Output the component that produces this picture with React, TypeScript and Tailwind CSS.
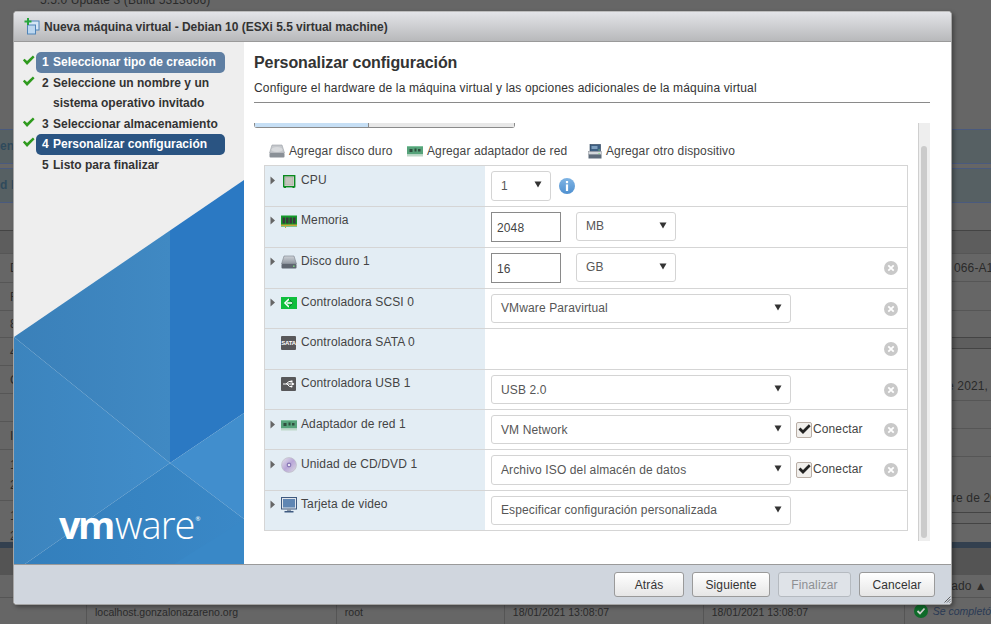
import React from "react";

const F = "font-['Liberation_Sans',Arial,sans-serif]";

function Caret() {
  return <svg width="6" height="9" viewBox="0 0 6 9" className="shrink-0"><path d="M0.5 0.5 L5 4.5 L0.5 8.5 Z" fill="#666" /></svg>;
}

function DriveIcon() {
  return (
    <svg width="16" height="14" viewBox="0 0 16 14">
      <defs><linearGradient id="dr" x1="0" y1="0" x2="0" y2="1"><stop offset="0" stopColor="#cfd3d8" /><stop offset="1" stopColor="#8e959e" /></linearGradient></defs>
      <path d="M3 1 H13 L15.5 9 H0.5 Z" fill="url(#dr)" stroke="#7b828a" strokeWidth="0.6" />
      <rect x="0.5" y="9" width="15" height="4.5" rx="1" fill="#5f6670" />
      <rect x="12" y="10.5" width="1.6" height="1.4" fill="#7fd67f" />
    </svg>
  );
}

function AddDiskIcon() {
  return (
    <svg width="16" height="15" viewBox="0 0 16 15">
      <path d="M3 1 H13 L15.5 9 H0.5 Z" fill="#c5c8cc" stroke="#9aa0a6" strokeWidth="0.6" />
      <ellipse cx="8" cy="5.5" rx="5.5" ry="2.6" fill="#d8dadd" />
      <rect x="0.5" y="9" width="15" height="4.5" rx="1" fill="#8a9097" />
    </svg>
  );
}

function CpuIcon() {
  return (
    <svg width="13" height="13" viewBox="0 0 13 13" className="ml-[2px]">
      <rect x="0.7" y="0.7" width="11" height="11" fill="#d3d3cc" stroke="#0a8a1f" strokeWidth="1.4" />
      <rect x="2.5" y="2.5" width="7.4" height="7.4" fill="#c4c4bc" stroke="#a8a8a0" strokeWidth="0.5" />
      <rect x="1" y="12" width="2" height="1" fill="#0a8a1f" />
      <rect x="9.5" y="12" width="2" height="1" fill="#0a8a1f" />
    </svg>
  );
}

function MemIcon() {
  return (
    <svg width="16" height="13" viewBox="0 0 16 13">
      <rect x="0" y="0.5" width="16" height="11" fill="#149a2a" />
      <rect x="0" y="9.5" width="16" height="1.5" fill="#c8a63a" />
      {[1.5, 5, 8.5, 12].map((x) => <rect key={x} x={x} y="2.5" width="2.6" height="6" fill="#3a3a3a" />)}
      <rect x="4" y="11.5" width="1" height="1.5" fill="#c8a63a" />
    </svg>
  );
}

function ScsiIcon() {
  return (
    <svg width="16" height="12" viewBox="0 0 16 12">
      <rect width="16" height="12" fill="#0fbf3c" />
      <path d="M8 2 L4 6 L8 10 M6 6 H12" fill="none" stroke="#fff" strokeWidth="1.6" />
      <path d="M8 2 L12 6 L8 10" fill="none" stroke="#0a6c22" strokeWidth="0.8" />
    </svg>
  );
}

function SataIcon() {
  return (
    <div className="w-[15px] h-[14px] bg-[#58585a] text-white text-[6px] font-bold leading-[14px] text-center rounded-[1px] tracking-[-0.2px]">SATA</div>
  );
}

function UsbIcon() {
  return (
    <svg width="15" height="14" viewBox="0 0 15 14">
      <rect width="15" height="14" rx="1" fill="#58585a" />
      <path d="M2 7 H13 M5 7 L8 4.5 H10 M6 7 L8.5 9.5 H10" fill="none" stroke="#fff" strokeWidth="1" />
      <path d="M11 5.5 L13.5 7 L11 8.5 Z" fill="#fff" />
      <rect x="9.5" y="3.5" width="2" height="2" fill="#fff" />
      <circle cx="10.5" cy="9.5" r="1" fill="#fff" />
    </svg>
  );
}

function NetIcon() {
  return (
    <svg width="16" height="11" viewBox="0 0 16 11">
      <rect width="16" height="8.5" fill="#56a37a" />
      <rect x="0" y="8.5" width="16" height="2" fill="#bfd9c9" />
      <rect x="2.5" y="3" width="3" height="3" fill="#2f4f3e" />
      <rect x="7.5" y="2.5" width="2" height="3" fill="#2f4f3e" />
      <rect x="11" y="3" width="2.5" height="2.5" fill="#2f4f3e" />
      <rect x="0" y="0" width="16" height="1" fill="#7fc29d" />
    </svg>
  );
}

function CdIcon() {
  return (
    <svg width="16" height="16" viewBox="0 0 16 16">
      <defs><linearGradient id="cd" x1="0" y1="0" x2="1" y2="1"><stop offset="0" stopColor="#e6e6ea" /><stop offset="0.5" stopColor="#b9a7d8" /><stop offset="1" stopColor="#dcdce2" /></linearGradient></defs>
      <circle cx="8" cy="8" r="7.5" fill="url(#cd)" stroke="#b4b4ba" strokeWidth="0.5" />
      <circle cx="8" cy="8" r="2.4" fill="#8b7bb8" />
      <circle cx="8" cy="8" r="1.1" fill="#fff" />
    </svg>
  );
}

function MonitorIcon() {
  return (
    <svg width="16" height="16" viewBox="0 0 16 16">
      <rect x="0.5" y="0.5" width="15" height="11.5" fill="#dfe4ea" stroke="#3e5a80" />
      <rect x="2" y="2" width="12" height="8.5" fill="#5f86b3" />
      <rect x="6" y="12" width="4" height="2" fill="#8b97a6" />
      <rect x="3.5" y="14" width="9" height="1.5" fill="#3e5a80" />
    </svg>
  );
}

function OtherDevIcon() {
  return (
    <svg width="14" height="15" viewBox="0 0 14 15">
      <rect x="2" y="0.5" width="10.5" height="7" fill="#3d5f82" stroke="#2a3f58" strokeWidth="0.6" />
      <rect x="3.5" y="2" width="6" height="3" fill="#7fa0bf" />
      <rect x="0.5" y="7.5" width="13" height="3" fill="#d2d6db" stroke="#8a9097" strokeWidth="0.5" />
      <rect x="0.5" y="10.5" width="13" height="4" fill="#5d6b7a" />
      <rect x="10.5" y="5.5" width="1.2" height="1" fill="#7fe07f" />
      <rect x="10.5" y="9" width="1.2" height="1" fill="#7fe07f" />
    </svg>
  );
}

function Info() {
  return (
    <svg width="16" height="16" viewBox="0 0 16 16">
      <defs><linearGradient id="inf" x1="0" y1="0" x2="0" y2="1"><stop offset="0" stopColor="#7fb4e4" /><stop offset="1" stopColor="#4f90d0" /></linearGradient></defs>
      <circle cx="8" cy="8" r="8" fill="url(#inf)" />
      <rect x="6.9" y="3" width="2.2" height="2.2" fill="#fff" />
      <rect x="6.9" y="6.4" width="2.2" height="6.6" fill="#fff" />
    </svg>
  );
}

function Remove() {
  return (
    <svg width="14" height="14" viewBox="0 0 14 14">
      <circle cx="7" cy="7" r="7" fill="#c9c9c9" />
      <path d="M4.3 4.3 L9.7 9.7 M9.7 4.3 L4.3 9.7" stroke="#fff" strokeWidth="1.8" />
    </svg>
  );
}

function Check({ size = 13 }: { size?: number }) {
  return (
    <svg width={size} height={size * 0.8} viewBox="0 0 15 12">
      <path d="M1 6 L3 4.2 L5.8 7 L12.6 0.5 L14.5 2.5 L5.8 11.5 Z" fill="#2f9a1e" />
    </svg>
  );
}

function Select({ w, h, text, low }: { w: string; h: string; text: string; low?: boolean }) {
  return (
    <div className={`${w} ${h} flex items-center justify-between pl-[9px] pr-[8px] bg-white border border-[#d4d4d4] rounded-[3px] text-[12px] text-[#565656]`}>
      <span className={low ? "" : "-mt-px"}>{text}</span>
      <svg width="8" height="7" viewBox="0 0 8 7" className="-mt-[3px]"><path d="M0.5 0.5 H7.5 L4 6.5 Z" fill="#333" /></svg>
    </div>
  );
}

function NumInput({ value }: { value: string }) {
  return (
    <div className="w-[70px] h-[30px] flex items-center pl-[5px] pt-px bg-white border border-[#8a8a8a] text-[12px] text-[#444]">{value}</div>
  );
}

function Conectar() {
  return (
    <div className="flex items-center ml-[5px] text-[12px] text-[#444]">
      <div className="relative w-[16px] h-[16px] bg-[#f1efec] border border-[#b9aea6] rounded-[2px] flex items-center justify-center">
        <svg width="13" height="11" viewBox="0 0 13 11"><path d="M0.5 5.5 L2.5 3.5 L5 6 L10.8 0.3 L12.7 2.2 L5 10 Z" fill="#222" /></svg>
      </div>
      <span className="ml-px -mt-px">Conectar</span>
    </div>
  );
}

type RowProps = { h: string; icon: React.ReactNode; label: string; caret?: boolean; remove?: boolean; low?: boolean; children?: React.ReactNode };

function TableRow({ h, icon, label, caret = true, remove = true, low, children }: RowProps) {
  return (
    <div className={`flex ${h} border-b border-[#d5d5d5]`}>
      <div className={`w-[220px] shrink-0 bg-[#e3edf4] flex items-start ${low ? "pt-[7px]" : "pt-[6px]"} pl-[5px] text-[12px] text-[#444]`}>
        <div className="w-[11px] h-[14px] flex items-center shrink-0">{caret ? <Caret /> : null}</div>
        <div className="w-[20px] h-[16px] flex items-center shrink-0">{icon}</div>
        <span className="leading-[14px]">{label}</span>
      </div>
      <div className="flex-1 flex items-start pt-[5px] pl-[6px] pr-[9px] relative">
        {children}
        {remove ? <div className="ml-auto mt-[8px]"><Remove /></div> : null}
      </div>
    </div>
  );
}

function Step({ n, label, done, pill }: { n: string; label: React.ReactNode; done?: boolean; pill?: string }) {
  return (
    <div className="flex items-start h-auto">
      <div className="w-[22px] h-[18px] pt-[3px] pl-[8px] shrink-0">{done ? <Check /> : null}</div>
      <div className={`w-[189px] flex px-[6px] rounded-[5px] leading-[20.5px] text-[12px] font-bold tracking-normal ${pill ?? "text-[#333]"}`}>
        <span className="w-[11px] shrink-0">{n}</span>
        <span>{label}</span>
      </div>
    </div>
  );
}

function FooterBtn({ w, label, disabled }: { w: string; label: string; disabled?: boolean }) {
  return (
    <div className={`${w} h-[25px] flex items-center justify-center rounded-[3px] border text-[12px] ${disabled ? "border-[#b5bac0] bg-[#dfe3e8] text-[#8d8f92]" : "border-[#9a9a9a] bg-gradient-to-b from-white to-[#e6e6e6] text-[#333]"}`}>
      {label}
    </div>
  );
}

function ToolItem({ icon, label, w }: { icon: React.ReactNode; label: string; w: string }) {
  return (
    <div className={`flex items-center ${w} text-[12px] text-[#444]`}>
      <div className="w-[20px] flex items-center">{icon}</div>
      <span>{label}</span>
    </div>
  );
}

function BgCell({ h, text, cls = "", line = "border-[#565656]" }: { h: string; text?: string; cls?: string; line?: string }) {
  return (
    <div className={`${h} shrink-0 border-b ${line} text-[12px] text-[#2a2a2a] whitespace-pre leading-[20px] overflow-hidden flex items-center ${cls}`}>{text}</div>
  );
}

function Background() {
  return (
    <div className="w-[991px] h-[624px] bg-[#666666] flex flex-col overflow-hidden">
      <div className="h-[129px] shrink-0 overflow-hidden pl-[40px] text-[12px] text-[#2a2a2a] leading-[14px]">
        <div className="-mt-[7px]">5.5.0 Update 3 (Build 5313666)</div>
      </div>
      <div className="h-[35px] bg-[#566063] border-y border-[#4a5a7e] text-[12px] font-bold text-[#2f4a5c] leading-[33px] shrink-0">en</div>
      <div className="h-[4px] shrink-0" />
      <div className="h-[35px] bg-[#566063] border-y border-[#4a5a7e] text-[12px] font-bold text-[#2f4a5c] leading-[33px] shrink-0">d l</div>
      <div className="h-[27px] shrink-0" />
      <div className="h-[312px] flex justify-between shrink-0 border-t border-[#444]">
        <div className="w-[20px] flex flex-col">
          <BgCell h="h-[23px]" cls="bg-[#5d5d5d]" />
          <BgCell h="h-[29px]" text="D" cls="pl-[10px]" />
          <BgCell h="h-[28px]" text="F" cls="pl-[10px]" />
          <BgCell h="h-[27px]" text="8" cls="pl-[10px]" />
          <BgCell h="h-[28px]" text="4" cls="pl-[10px]" />
          <BgCell h="h-[28px]" text="C" cls="pl-[10px]" />
          <BgCell h="h-[28px]" />
          <BgCell h="h-[28px]" text="I" cls="pl-[10px]" />
          <BgCell h="h-[51px]" text={"1\n2"} cls="pl-[10px]" />
          <BgCell h="h-[41px]" text={"1\n2"} cls="pl-[10px] items-start pt-[5px]" line="border-transparent" />
        </div>
        <div className="w-[39px] flex flex-col">
          <BgCell h="h-[23px]" cls="bg-[#5d5d5d]" />
          <BgCell h="h-[28px]" text="066-A1" cls="pl-[2px]" />
          <BgCell h="h-[29px]" />
          <BgCell h="h-[27px]" line="border-[#444]" />
          <BgCell h="h-[11px]" line="border-[#444]" cls="bg-[#5e5e5e]" />
          <BgCell h="h-[52px]" text="e 2021," cls="items-end justify-end pb-[4px] pr-[3px]" />
          <BgCell h="h-[28px]" />
          <BgCell h="h-[28px]" />
          <BgCell h="h-[56px]" text="re de 20" cls="items-end pb-[4px]" line="border-[#444]" />
          <BgCell h="h-[11px]" line="border-[#444]" />
          <BgCell h="h-[17px]" line="border-transparent" />
        </div>
      </div>
      <div className="h-[6px] bg-[#33404f] shrink-0" />
      <div className="h-[27px] bg-[#545454] shrink-0" />
      <div className="h-[23px] bg-[#666666] border-b border-[#555] flex justify-end shrink-0 text-[12px] text-[#2a2a2a] tracking-normal">
        <div className="w-[86px] border-l border-[#555] flex items-center pl-[28px] whitespace-nowrap overflow-hidden">Estado ▲</div>
      </div>
      <div className="flex-1 flex text-[10.5px] text-[#2a2a2a] items-stretch tracking-normal">
        <div className="w-[87px] border-r border-[#555]" />
        <div className="w-[250px] border-r border-[#555] pl-[8px] pt-[7px]">localhost.gonzalonazareno.org</div>
        <div className="w-[168px] border-r border-[#555] pl-[8px] pt-[7px]">root</div>
        <div className="w-[199px] border-r border-[#555] pl-[8px] pt-[7px]">18/01/2021 13:08:07</div>
        <div className="w-[201px] border-r border-[#555] pl-[8px] pt-[7px]">18/01/2021 13:08:07</div>
        <div className="flex-1 flex items-start pl-[9px] pt-[6px] gap-[5px] italic text-[#2a3a55]">
          <svg width="14" height="14" viewBox="0 0 14 14" className="shrink-0"><circle cx="7" cy="7" r="7" fill="#0f6b2a" /><path d="M3.5 7 L6 9.5 L10.5 4.5" fill="none" stroke="#d0d0d0" strokeWidth="1.8" /></svg>
          <span className="whitespace-nowrap">Se completó</span>
        </div>
      </div>
    </div>
  );
}

function SideArt() {
  return (
    <svg className="absolute left-0 bottom-0" width="230" height="394" viewBox="0 0 230 394" preserveAspectRatio="none">
      <defs>
        <linearGradient id="a1" x1="0" y1="0" x2="1" y2="0"><stop offset="0" stopColor="#3a80b9" /><stop offset="1" stopColor="#4089c3" /></linearGradient>
        <linearGradient id="a2" x1="0" y1="0" x2="1" y2="0"><stop offset="0" stopColor="#3c84bd" /><stop offset="1" stopColor="#418dca" /></linearGradient>
        <linearGradient id="a3" x1="0" y1="0" x2="1" y2="0"><stop offset="0" stopColor="#337fbc" /><stop offset="1" stopColor="#3a88c7" /></linearGradient>
      </defs>
      <polygon points="0,167 156,60.5 156,293" fill="url(#a1)" />
      <polygon points="0,167 156,293 11,394 0,394" fill="url(#a2)" />
      <polygon points="156,60.5 230,10 230,243 156,293" fill="#2b79c3" />
      <polygon points="156,293 230,243 230,349" fill="#418ecd" />
      <polygon points="11,394 156,293 230,349 230,394" fill="url(#a3)" />
      <polygon points="160,394 230,350 230,394" fill="#3988c7" />
    </svg>
  );
}

export default function App() {
  return (
    <div className={`relative w-[991px] h-[624px] overflow-hidden tracking-[0.12px] ${F}`}>
      <Background />
      <div className="absolute left-[13px] top-[11px] w-[939px] h-[594px] flex flex-col rounded-[4px] border border-[#a4a4a4] border-t-[#bdbdbd] bg-white overflow-hidden shadow-[2px_2px_4px_rgba(0,0,0,0.35)]">
        <div className="h-[30px] shrink-0 flex items-center pl-[10px] bg-gradient-to-b from-[#e3e4e8] to-[#b8b9bb] border-b border-[#9a9a9a] text-[12px] font-bold text-[#333] tracking-[-0.03px]">
          <svg width="16" height="17" viewBox="0 0 16 17" className="mr-[4px]">
            <rect x="4" y="3" width="11" height="9" fill="#d5e6f5" stroke="#4f84b8" />
            <rect x="3.5" y="7" width="8" height="9" fill="#bcd7ef" stroke="#4f84b8" />
            <path d="M3 0 H5 V2.5 H7.5 V4.5 H5 V7 H3 V4.5 H0.5 V2.5 H3 Z" fill="#27a53c" />
          </svg>
          <span>Nueva máquina virtual - Debian 10 (ESXi 5.5 virtual machine)</span>
        </div>
        <div className="flex-1 flex min-h-0">
          <div className="relative w-[230px] shrink-0 bg-[#eeeeee] pt-[10px]">
            <SideArt />
            <div className="relative flex flex-col">
              <Step n="1" label="Seleccionar tipo de creación" done pill="bg-[#5f7fa3] text-white" />
              <Step n="2" label={<>Seleccione un nombre y un<br />sistema operativo invitado</>} done />
              <Step n="3" label="Seleccionar almacenamiento" done />
              <Step n="4" label="Personalizar configuración" done pill="bg-[#2a5482] text-white" />
              <Step n="5" label="Listo para finalizar" />
            </div>
            <div className="absolute left-[45px] top-[462px] text-white leading-[40px] text-[38px] flex items-start font-['Open_Sans','Liberation_Sans',sans-serif]">
              <span className="font-bold tracking-[-2.5px]">vm</span>
              <span className="font-light tracking-[-0.9px] ml-[2px]">ware</span>
              <span className="text-[6px] leading-[6px] mt-[12px] ml-[1px]">®</span>
            </div>
          </div>
          <div className="flex-1 min-w-0 pl-[10px] pr-[21px] pt-[10px] flex flex-col">
            <h1 className="text-[16px] leading-[22px] font-bold text-[#333] tracking-[-0.08px]">Personalizar configuración</h1>
            <p className="text-[12px] leading-[14px] mt-[7px] text-[#333] tracking-[0.15px]">Configure el hardware de la máquina virtual y las opciones adicionales de la máquina virtual</p>
            <div className="border-b border-[#8a8a8a] mt-[7px]" />
            <div className="flex mt-[20px] flex-1 min-h-0 items-start">
              <div className="flex-1 min-w-0 flex flex-col">
                <div className="flex h-[5px] w-[261px] border-b border-[#8a8a8a] rounded-b-[3px] overflow-hidden">
                  <div className="w-[115px] bg-[#c6dff5] border-l border-r border-[#8a8a8a]" />
                  <div className="flex-1 bg-[#e8e8e8] border-r border-[#8a8a8a]" />
                </div>
                <div className="ml-[10px] flex flex-col">
                  <div className="h-[37px] flex items-end pl-[5px] pb-[5px]">
                    <ToolItem w="w-[138px]" icon={<AddDiskIcon />} label="Agregar disco duro" />
                    <ToolItem w="w-[181px]" icon={<NetIcon />} label="Agregar adaptador de red" />
                    <div className="flex items-center text-[12px] text-[#444]">
                      <div className="w-[18px]"><OtherDevIcon /></div>
                      <span>Agregar otro dispositivo</span>
                    </div>
                  </div>
                  <div className="border border-[#d5d5d5] border-b-0 w-[644px]">
                    <TableRow h="h-[41px]" icon={<CpuIcon />} label="CPU" remove={false} low>
                      <Select w="w-[60px]" h="h-[30px]" text="1" />
                      <div className="ml-[8px] mt-[7px]"><Info /></div>
                    </TableRow>
                    <TableRow h="h-[41px]" icon={<MemIcon />} label="Memoria" remove={false}>
                      <NumInput value="2048" />
                      <div className="ml-[15px]"><Select w="w-[100px]" h="h-[29px]" text="MB" /></div>
                    </TableRow>
                    <TableRow h="h-[41px]" icon={<DriveIcon />} label="Disco duro 1">
                      <NumInput value="16" />
                      <div className="ml-[15px]"><Select w="w-[100px]" h="h-[29px]" text="GB" /></div>
                    </TableRow>
                    <TableRow h="h-[40px]" icon={<ScsiIcon />} label="Controladora SCSI 0">
                      <Select w="w-[300px]" h="h-[29px]" text="VMware Paravirtual" />
                    </TableRow>
                    <TableRow h="h-[41px]" icon={<SataIcon />} label="Controladora SATA 0" caret={false} />
                    <TableRow h="h-[40px]" icon={<UsbIcon />} label="Controladora USB 1" caret={false}>
                      <Select w="w-[300px]" h="h-[29px]" text="USB 2.0" low />
                    </TableRow>
                    <TableRow h="h-[40px]" icon={<NetIcon />} label="Adaptador de red 1" low>
                      <Select w="w-[300px]" h="h-[29px]" text="VM Network" low />
                      <div className="mt-[6px]"><Conectar /></div>
                    </TableRow>
                    <TableRow h="h-[41px]" icon={<CdIcon />} label="Unidad de CD/DVD 1" low>
                      <Select w="w-[300px]" h="h-[30px]" text="Archivo ISO del almacén de datos" />
                      <div className="mt-[6px]"><Conectar /></div>
                    </TableRow>
                    <TableRow h="h-[40px]" icon={<MonitorIcon />} label="Tarjeta de video" remove={false}>
                      <Select w="w-[300px]" h="h-[29px]" text="Especificar configuración personalizada" />
                    </TableRow>
                  </div>
                </div>
              </div>
              <div className="w-[12px] h-[418px] shrink-0 bg-[#eeeeee] border-l border-[#cfcfcf] pt-[23px] pl-[2px]">
                <div className="w-[6px] h-[392px] bg-[#cbcbcb] rounded-[3px]" />
              </div>
            </div>
          </div>
        </div>
        <div className="relative h-[40px] shrink-0 bg-[#d0d6de] border-t border-[#9a9a9a] flex items-start justify-end gap-[8px] pt-[7px] pr-[16px]">
          <FooterBtn w="w-[70px]" label="Atrás" />
          <FooterBtn w="w-[78px]" label="Siguiente" />
          <FooterBtn w="w-[73px]" label="Finalizar" disabled />
          <FooterBtn w="w-[76px]" label="Cancelar" />
          <svg width="7" height="7" viewBox="0 0 7 7" className="absolute right-[0px] bottom-[1px]">
            <path d="M0.5 6.5 L6.5 0.5 M3 6.5 L6.5 3 M5.5 6.5 L6.5 5.5" stroke="#555" strokeWidth="0.9" />
          </svg>
        </div>
      </div>
    </div>
  );
}
